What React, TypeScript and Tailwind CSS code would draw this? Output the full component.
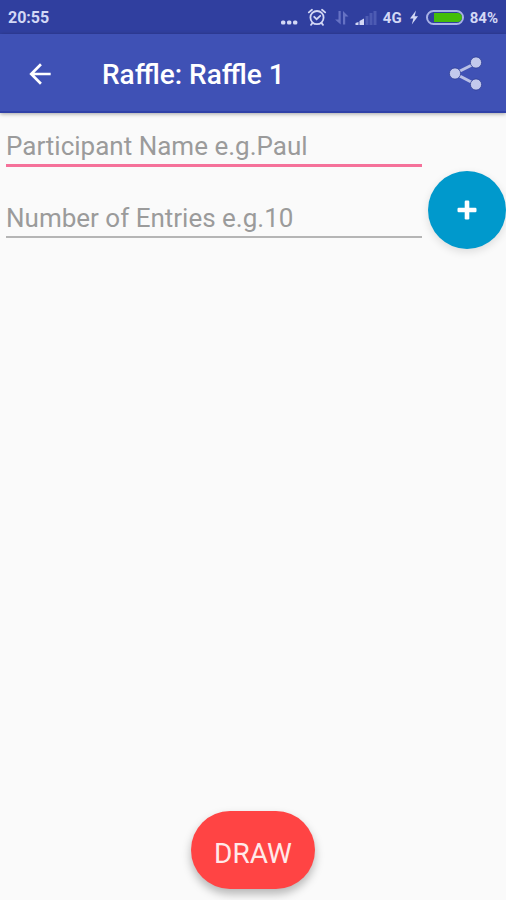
import { useState } from "react";
import type { FormEvent } from "react";

interface Entry {
  name: string;
  count: number;
}

const INPUT_STYLES =
  "block w-full bg-transparent px-0 text-[26px] leading-8 text-gray-800 placeholder:text-[#9b9b9b] outline-none";

function StatusBar() {
  return (
    <div className="flex h-[34px] items-center justify-between bg-[#303f9f] px-2 pt-0.5 font-bold text-[#d3d8f5]">
      <span className="text-base">20:55</span>
      <div className="flex items-center gap-1.5 text-[15px]">
        <svg className="h-5 w-5" viewBox="0 0 20 20" fill="currentColor">
          <rect x="0" y="12.5" width="4.4" height="4" rx="1.6" />
          <rect x="6" y="12.5" width="4.4" height="4" rx="1.6" />
          <rect x="12" y="12.5" width="4.4" height="4" rx="1.6" />
        </svg>
        <svg
          className="h-5 w-[22px]"
          viewBox="0 0 22 20"
          fill="none"
          stroke="currentColor"
          strokeWidth="1.8"
          strokeLinecap="round"
        >
          <circle cx="10" cy="9.6" r="6.600" />
          <path d="M7.200 8.800 9.600 11.200l3.600-3.400M1.800 4.400 5 1.800M15 1.800l3.200 2.600M5.400 15.200 4 16.800M14.600 15.200l1.400 1.600" />
        </svg>
        <svg className="h-5 w-3.5" viewBox="0 0 14 20" fill="#6672c4">
          <path d="M3.500 3h2.200v13.500L0 11.500h3.500zM8 3l5.500 5.500h-3.300v8H8z" />
        </svg>
        <svg className="h-5 w-[22px]" viewBox="0 0 22 20" fill="#4d5bb3">
          <path d="M0.500 17v-2l3-1v3zM4.500 17v-4l4.500-2.500V17z" fill="#d3d8f5" />
          <rect x="10.500" y="8" width="3" height="9" />
          <rect x="14.500" y="5" width="3" height="12" />
          <rect x="18.500" y="3" width="3" height="14" />
        </svg>
        <span>4G</span>
        <svg className="h-5 w-3" viewBox="0 0 12 20" fill="currentColor">
          <path d="M8 2.500 2 10.500h3.400L3.800 16.500 10 8.300H6.600z" />
        </svg>
        <svg className="h-4 w-[38px]" viewBox="0 0 38 16">
          <rect
            x="1"
            y="1"
            width="36"
            height="13"
            rx="6.500"
            fill="#303f9f"
            stroke="#a9b2e6"
            strokeWidth="2"
          />
          <path d="M8 3h23.500a4.500 4.500 0 0 1 0 9H8z" fill="#44bd09" />
        </svg>
        <span>84%</span>
      </div>
    </div>
  );
}

function AppBar() {
  return (
    <header className="relative flex h-[79px] items-center border-b-2 border-[#3041a8] bg-[#3f51b5] px-5 pt-0.5 text-white shadow-[0_1px_4px_rgba(0,0,0,0.35)]">
      <button type="button" aria-label="Back" className="p-1">
        <svg className="h-8 w-8" viewBox="0 0 24 24" fill="currentColor">
          <path d="M20 11H7.830l5.590-5.590L12 4l-8 8 8 8 1.410-1.410L7.830 13H20v-2z" />
        </svg>
      </button>
      <h1 className="ml-[42px] flex-1 pt-0.5 text-[28px] leading-8 font-medium">Raffle: Raffle 1</h1>
      <button type="button" aria-label="Share">
        <svg className="h-10 w-10" viewBox="0 0 40 40">
          <path
            d="M30 9 9 19.500l21 11"
            fill="none"
            stroke="#b9c0e6"
            strokeWidth="3"
          />
          <g fill="#c3c9ec" stroke="#2f3e94" strokeWidth="0.8">
            <circle cx="30" cy="8.500" r="5.600" />
            <circle cx="9" cy="19.500" r="5.600" />
            <circle cx="30" cy="30.500" r="5.600" />
          </g>
        </svg>
      </button>
    </header>
  );
}

export default function App() {
  const [name, setName] = useState("");
  const [count, setCount] = useState("");
  const [entries, setEntries] = useState<Entry[]>([]);
  const [winner, setWinner] = useState("");

  function addEntry(e: FormEvent) {
    e.preventDefault();
    const n = Number(count);
    if (!name || !(n > 0)) return;
    setEntries([...entries, { name, count: n }]);
    setName("");
    setCount("");
  }

  function draw() {
    const total = entries.reduce((sum, entry) => sum + entry.count, 0);
    let ticket = Math.random() * total;
    for (const entry of entries) {
      ticket -= entry.count;
      if (ticket < 0) {
        setWinner(entry.name);
        return;
      }
    }
  }

  return (
    <div className="flex min-h-screen flex-col bg-[#fafafa] font-[Roboto,sans-serif]">
      <StatusBar />
      <AppBar />

      <form onSubmit={addEntry} className="flex items-end gap-1.5 pt-4 pl-1.5">
        <div className="min-w-0 flex-1 pb-[11px]">
          <div className="border-b-[3px] border-[#f5719a] pt-px pb-0.5">
            <input
              aria-label="Participant Name"
              placeholder="Participant Name e.g.Paul"
              value={name}
              onChange={(e) => setName(e.target.value)}
              className={INPUT_STYLES}
            />
          </div>
          <div className="mt-[34px] border-b-2 border-[#b5b5b5] pt-px pb-0.5">
            <input
              aria-label="Number of Entries"
              inputMode="numeric"
              placeholder="Number of Entries e.g.10"
              value={count}
              onChange={(e) => setCount(e.target.value)}
              className={INPUT_STYLES}
            />
          </div>
        </div>
        <button
          type="submit"
          aria-label="Add participant"
          className="flex size-[78px] shrink-0 items-center justify-center rounded-full bg-[#0099cc] text-white shadow-[0_3px_8px_rgba(0,0,0,0.12)]"
        >
          <svg className="h-5 w-5" viewBox="0 0 20 20" fill="currentColor">
            <rect x="7.700" y="0.500" width="4.600" height="19" rx="1.200" />
            <rect x="0.500" y="7.700" width="19" height="4.600" rx="1.200" />
          </svg>
        </button>
      </form>

      <ul className="flex-1 px-1.5 text-xl text-gray-700">
        {entries.map((entry, i) => (
          <li key={i} className="py-2">
            {entry.name} {entry.count}
          </li>
        ))}
      </ul>

      <footer className="flex flex-col items-center pb-[11px]">
        {winner && <p className="pb-4 text-2xl text-gray-800">{winner}</p>}
        <button
          type="button"
          onClick={draw}
          className="h-[78px] rounded-full bg-[#ff4444] px-[23px] pt-2 text-[28px] leading-8 text-[#ffe9e9] shadow-[0_5px_10px_rgba(0,0,0,0.28)]"
        >
          DRAW
        </button>
      </footer>
    </div>
  );
}
